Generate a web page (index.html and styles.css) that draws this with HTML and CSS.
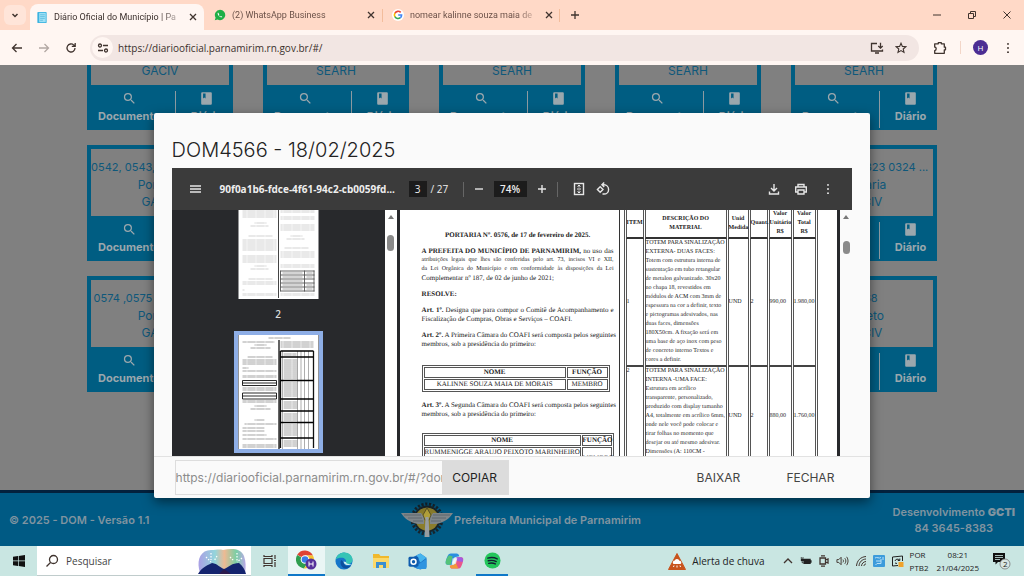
FILE: index.html
```html
<!DOCTYPE html>
<html lang="pt-BR">
<head>
<meta charset="utf-8">
<title>Diário Oficial do Município | Parnamirim</title>
<link rel="stylesheet" href="styles.css">
</head>
<body>
<svg class="defs" aria-hidden="true">
  <symbol id="i-search" viewBox="0 0 24 24"><path d="M15.5 14h-.79l-.28-.27A6.471 6.471 0 0 0 16 9.5 6.5 6.5 0 1 0 9.5 16c1.61 0 3.09-.59 4.23-1.57l.27.28v.79l5 4.99L20.49 19l-4.99-5zm-6 0C7.01 14 5 11.99 5 9.5S7.01 5 9.5 5 14 7.01 14 9.5 11.99 14 9.5 14z"/></symbol>
  <symbol id="i-book" viewBox="0 0 24 24"><path d="M19 2H5c-1 0-1.500.5-1.500 1.500v17c0 1 .5 1.500 1.500 1.500h14c1 0 1.500-.5 1.500-1.500v-17C20.500 2.500 20 2 19 2zM6.500 4h4v8l-2-1.500-2 1.500z"/></symbol>
  <symbol id="i-close" viewBox="0 0 10 10"><path d="M2 2l6 6M8 2l-6 6"/></symbol>
  <symbol id="i-dots" viewBox="0 0 16 16"><path d="M8 2.500v.01M8 8v.01M8 13.500v.01" stroke-width="2.600" stroke-linecap="round"/></symbol>
</svg>

<header class="browser">
  <div class="tabs">
    <button class="tab-menu" aria-label="Pesquisar guias"><svg class="ln" viewBox="0 0 10 10" width="10" height="10"><path d="M2.500 4L5 6.500 7.500 4" stroke-width="1.500"/></svg></button>
    <div class="tab active">
      <svg viewBox="0 0 12 14" width="12" height="13"><rect x="1" y="1" width="10" height="12" rx="1" fill="#3bb3e0"/><rect x="3" y="2" width="7" height="10" fill="#9ee0f5"/><path d="M4 4h5M4 6h5M4 8h5M4 10h3" stroke="#58b9dd" stroke-width=".8"/></svg>
      <span class="tab-title">Diário Oficial do Município | Pa</span>
      <button aria-label="Fechar guia"><svg class="ln" width="10" height="10"><use href="#i-close"/></svg></button>
    </div>
    <div class="tab">
      <svg viewBox="0 0 12 12" width="12" height="12"><path d="M6 .8a5.200 5.200 0 1 1-2.400 9.800L.8 11.300l.8-2.600A5.200 5.200 0 0 1 6 .8z" fill="#1fae45"/><path d="M4 3.500c-.8.800-.3 2.300.9 3.500s2.700 1.800 3.500.9l-1.300-1-.7.500c-.8-.3-1.200-.8-1.500-1.500l.4-.7z" fill="#fff"/></svg>
      <span class="tab-title">(2) WhatsApp Business</span>
      <button aria-label="Fechar guia"><svg class="ln" width="10" height="10"><use href="#i-close"/></svg></button>
    </div>
    <div class="tab divided">
      <svg viewBox="0 0 12 12" width="12" height="12"><circle cx="6" cy="6" r="6" fill="#fff"/><g fill="none" stroke-width="1.600"><path d="M8.700 3.400A3.600 3.600 0 0 0 2.900 4.300" stroke="#ea4335"/><path d="M2.900 4.200a3.600 3.600 0 0 0 0 3.600" stroke="#fbbc05"/><path d="M2.900 7.700a3.600 3.600 0 0 0 5.400 1" stroke="#34a853"/><path d="M8.300 8.800A3.600 3.600 0 0 0 9.600 6H6.200" stroke="#4285f4"/></g></svg>
      <span class="tab-title">nomear kalinne souza maia de</span>
      <button aria-label="Fechar guia"><svg class="ln" width="10" height="10"><use href="#i-close"/></svg></button>
    </div>
    <button class="new-tab" aria-label="Nova guia"><svg class="ln" viewBox="0 0 10 10" width="10" height="10"><path d="M5 1v8M1 5h8"/></svg></button>
    <div class="window-buttons">
      <button aria-label="Minimizar"><svg class="ln thin" viewBox="0 0 10 10" width="10" height="10"><path d="M1 5h8"/></svg></button>
      <button aria-label="Restaurar"><svg class="ln thin" viewBox="0 0 10 10" width="10" height="10"><path d="M1.500 3.500h5v5h-5zM3.500 3.500v-2h5v5h-2"/></svg></button>
      <button aria-label="Fechar"><svg class="ln thin" viewBox="0 0 10 10" width="10" height="10"><path d="M1.500 1.500l7 7M8.500 1.500l-7 7"/></svg></button>
    </div>
  </div>
  <div class="toolbar">
    <button aria-label="Voltar"><svg class="ln" viewBox="0 0 12 12" width="12" height="12"><path d="M11 6H2M5.500 2L1.500 6l4 4"/></svg></button>
    <button class="off" aria-label="Avançar"><svg class="ln" viewBox="0 0 12 12" width="12" height="12"><path d="M1 6h9M6.500 2l4 4-4 4"/></svg></button>
    <button aria-label="Recarregar"><svg class="ln" viewBox="0 0 12 12" width="12" height="12"><path d="M10 6a4 4 0 1 1-1.200-2.900L10 4.200M10.200 1v3.400H6.800"/></svg></button>
    <div class="omnibox">
      <span class="site-info"><svg class="ln" viewBox="0 0 12 12" width="12" height="12"><circle cx="3" cy="3.500" r="1.500"/><path d="M6 3.500h5M1 8.500h5"/><circle cx="9" cy="8.500" r="1.500"/></svg></span>
      <input class="address" type="text" aria-label="Endereço" value="https://diariooficial.parnamirim.rn.gov.br/#/">
      <button aria-label="Instalar"><svg class="ln" viewBox="0 0 14 12" width="14" height="12"><path d="M7 1.500H1.500v7.500h11V7.500M5 11h4M10.500.8v5M8.300 4l2.200 2.200L12.700 4"/></svg></button>
      <button aria-label="Favoritar"><svg class="ln" viewBox="0 0 12 12" width="12" height="12"><path d="M6 1.200l1.400 3.200 3.500.3-2.700 2.300.8 3.400-3-1.800-3 1.800.8-3.400L1.100 4.700l3.500-.3z" stroke-width="1.100"/></svg></button>
    </div>
    <button class="ext" aria-label="Extensões"><svg class="ln" viewBox="0 0 14 14" width="14" height="14"><path d="M1.700 2.800h3.600V1.700h3v1.100h3v3.400h1.200v2.600h-1.200v3.500H1.700V9.600c2-.3 2-3.300 0-3.600z" stroke-width="1.300" stroke-linejoin="round"/></svg></button>
    <span class="bar"></span>
    <button class="avatar" aria-label="Perfil">H</button>
    <button aria-label="Menu"><svg class="ln" width="12" height="12"><use href="#i-dots"/></svg></button>
  </div>
</header>

<div class="viewport">
  <main class="board"><div class="cards" id="cards"></div></main>
  <footer class="site-footer">
    <p>© 2025 - DOM - Versão 1.1</p>
    <div class="brand">
      <svg viewBox="0 0 52 38" width="52" height="38"><circle cx="26" cy="18" r="15" fill="none" stroke="#17242c" stroke-width="3" stroke-dasharray="2.200 1.600"/><circle cx="26" cy="18" r="13.500" fill="#17242c"/><circle cx="26" cy="18" r="11.500" fill="#8b7d2c"/><path d="M0 12h20l3 4v7h-6C8 21 3 17 0 12zM52 12H32l-3 4v7h6c9-2 14-6 17-11z" fill="#7f868a"/><path d="M3 14h17M7 17h14M12 20h10M49 14H32M45 17H31M40 20H30" stroke="#596168" stroke-width=".8"/><path d="M26 7l4 7-2 5h-4l-2-5z" fill="#b1a03a" stroke="#3c3a22" stroke-width=".7"/><path d="M24.500 16h3l1 20h-5z" fill="#989da0"/></svg>
      <span>Prefeitura Municipal de Parnamirim</span>
    </div>
    <p class="dev">Desenvolvimento <b>GCTI</b><br>84 3645-8383</p>
  </footer>

  <div class="overlay">
    <section class="modal" role="dialog" aria-labelledby="dlg-title">
      <div class="modal-content">
        <h1 id="dlg-title">DOM4566 - 18/02/2025</h1>
        <div class="pdf">
          <div class="pdf-bar">
            <button aria-label="Menu"><svg viewBox="0 0 12 12" width="12" height="12"><path d="M0 3h11M0 6h11M0 9h11"/></svg></button>
            <span class="pdf-name">90f0a1b6-fdce-4f61-94c2-cb0059fd...</span>
            <input class="page-no" type="text" aria-label="Página" value="3">
            <span class="page-total">/ 27</span>
            <span class="sep"></span>
            <button aria-label="Reduzir"><svg viewBox="0 0 10 10" width="10" height="10"><path d="M1 5h8"/></svg></button>
            <input class="zoom" type="text" aria-label="Zoom" value="74%">
            <button aria-label="Ampliar"><svg viewBox="0 0 10 10" width="10" height="10"><path d="M1 5h8M5 1v8"/></svg></button>
            <span class="sep near"></span>
            <button class="fit" aria-label="Ajustar"><svg viewBox="0 0 12 14" width="12" height="14"><rect x="1.500" y="1.500" width="9" height="11"/><path d="M6 3v2.500M4.500 4.500L6 3l1.500 1.500M6 11V8.500M4.500 9.500L6 11l1.500-1.500M4 7h4" stroke-width="1"/></svg></button>
            <button aria-label="Girar"><svg viewBox="0 0 14 14" width="14" height="14"><path d="M4.200 4.700L7 7.500l-2.800 2.800-2.800-2.800zM6 2.800h2a4.500 4.500 0 0 1 0 9.200H6.500M8.200.5L5.900 2.800l2.300 2.300"/></svg></button>
            <span class="push"></span>
            <button aria-label="Baixar"><svg viewBox="0 0 12 12" width="12" height="12"><path d="M6 1v6.500M3 5l3 3 3-3M1.500 8.500V11h9V8.500"/></svg></button>
            <button aria-label="Imprimir"><svg viewBox="0 0 14 12" width="14" height="12"><path d="M4 3.500v-2h6v2M4 9H1.700V4h10.600v5H10M4 7h6v4H4z"/></svg></button>
            <button aria-label="Mais"><svg width="12" height="12"><use href="#i-dots"/></svg></button>
          </div>
          <div class="pdf-body">
            <div class="thumbs">
              <div class="thumb">
                <svg viewBox="0 0 80 89" width="81" height="89">
                  <defs>
                    <pattern id="p-light" width="9" height="2" patternUnits="userSpaceOnUse"><path d="M0 1h8.500" stroke="#c8c8c8" stroke-width=".8"/></pattern>
                    <pattern id="p-dark" width="9" height="2" patternUnits="userSpaceOnUse"><path d="M0 1h8.500" stroke="#8c8c8c" stroke-width=".8"/></pattern>
                  </defs>
                  <rect width="80" height="89" fill="#fff"/>
                  <g fill="url(#p-light)"><path d="M4 0h34v8H4zM16 12h12v2H16zM12 15h18v2H12zM10 25h24v2H10zM4 29h34v12H4zM4 45h34v8H4zM16 55h12v2H16zM12 58h18v2H12zM10 68h24v2H10zM4 71h34v4H4zM4 79h2v2H4zM4 83h34v3H4zM42 0h34v3H42zM42 6h34v4H42zM42 14h34v7H42zM52 25h12v2H52zM48 28h18v2H48zM46 37h24v2H46zM42 41h34v7H42zM42 54h34v4H42zM42 83h34v3H42z"/></g>
                  <path d="M40 0v88" stroke="#444"/>
                  <path d="M42 61h34M42 65h34M42 69h34M42 73h34M42 77h34M42 81h34M42 60.500v21M66 60.500v21M75.500 60.500v21" stroke="#555" stroke-width=".9" fill="none"/>
                  <path d="M44 63h20M44 67h20M44 71h20M44 75h20M44 79h20M68 63h6M68 67h6M68 75h6M68 79h6" stroke="#aaa" stroke-width="1.200"/>
                </svg>
              </div>
              <span class="thumb-label">2</span>
              <div class="thumb current">
                <svg viewBox="0 0 80 114" width="81" height="114">
                  <rect width="80" height="114" fill="#fff"/>
                  <g fill="url(#p-dark)"><path d="M30 2h22v2H30zM4 6h32v2H4zM16 9h12v2H16zM12 12h20v2H12zM9 21h25v2H9zM4 24h34v6H4zM4 32h6v2H4zM4 35h34v2H4zM4 40h34v3H4zM4 52h34v4H4zM4 65h34v3H4zM16 70h12v2H16zM12 73h20v2H12zM16 84h10v2H16zM6 88h32v2H6zM4 92h22v2H4zM4 95h22v2H4zM4 99h24v2H4zM4 103h34v2H4zM4 109h34v4H4zM42 6h33v7H42zM45 18h13v3H45zM45 24h14v20H45zM45 47h14v15H45zM45 66h14v8H45zM45 78h14v8H45zM45 89h14v12H45zM45 105h14v7H45z"/></g>
                  <path d="M59 16v98M62.500 16v98M66 16v98M70 16v98M44 16v98" stroke="#777" stroke-width=".6"/>
                  <path d="M40.500 5v109M42 16v97M75 16v97" stroke="#111" stroke-width="1.300"/>
                  <path d="M42 16h33M42 22h33M42 45.500h33M42 64h33M42 76h33M42 87.500h33M42 103h33" stroke="#000" stroke-width="1.600"/>
                  <path d="M4 45.500h34v5H4zM4 48h34M4 58h34v6H4zM4 61h34" fill="none" stroke="#111" stroke-width=".9"/>
                </svg>
              </div>
            </div>
            <div class="scroll"><i class="up"></i><i class="knob"></i></div>
            <div class="page">
              <div class="col-left">
                <h2>PORTARIA Nº. 0576, de 17 de fevereiro de 2025.</h2>
                <p><span><b>A PREFEITA DO MUNICÍPIO DE PARNAMIRIM,</b> no uso das</span><span class="dense">atribuições legais que lhes são conferidas pelo art. 73, incisos VI e XII,</span><span class="dense">da Lei Orgânica do Município e em conformidade às disposições da Lei</span><span>Complementar nº 187, de 02 de junho de 2021;</span></p>
                <p><span><b>RESOLVE:</b></span></p>
                <p><span><b>Art. 1º.</b> Designa que para compor o Comitê de Acompanhamento e</span><span>Fiscalização de Compras, Obras e Serviços – COAFI.</span></p>
                <p><span><b>Art. 2º.</b> A Primeira Câmara do COAFI será composta pelos seguintes</span><span>membros, sob a presidência do primeiro:</span></p>
                <table class="members">
                  <tr><th>NOME</th><th class="role">FUNÇÃO</th></tr>
                  <tr><td>KALINNE SOUZA MAIA DE MORAIS</td><td>MEMBRO</td></tr>
                </table>
                <p><span><b>Art. 3º.</b> A Segunda Câmara do COAFI será composta pelos seguintes</span><span>membros, sob a presidência do primeiro:</span></p>
                <table class="members second">
                  <tr><th>NOME</th><th class="role">FUNÇÃO</th></tr>
                  <tr><td>RUMMENIGGE ARAUJO PEIXOTO MARINHEIRO</td><td rowspan="2">MEMBRO</td></tr>
                  <tr><td></td></tr>
                </table>
              </div>
              <div class="col-right">
                <table class="items">
                  <colgroup><col class="w-item"><col class="w-desc"><col class="w-unit"><col class="w-qty"><col class="w-val"><col class="w-val"></colgroup>
                  <tr><th>ITEM</th><th>DESCRIÇÃO DO<br>MATERIAL</th><th>Unid<br>Medida</th><th>Quant.</th><th>Valor<br>Unitário<br>R$</th><th>Valor<br>Total<br>R$</th></tr>
                  <tr><td>1</td><td>TOTEM PARA SINALIZAÇÃO<br>EXTERNA- DUAS FACES:<br>Totem com estrutura interna de<br>sustentação em tubo retangular<br>de metalon galvanizado. 30x20<br>no chapa 18, revestidos em<br>módulos de ACM com 3mm de<br>espessura na cor a definir, texto<br>e pictogramas adesivados, nas<br>duas faces, dimensões<br>180X50cm. A fixação será em<br>uma base de aço inox com peso<br>de concreto interno Textos e<br>cores a definir.</td><td>UND</td><td>2</td><td>990,00</td><td>1.980,00</td></tr>
                  <tr><td class="top">2</td><td>TOTEM PARA SINALIZAÇÃO<br>INTERNA -UMA FACE:<br>Estrutura em acrílico<br>transparente, personalizado,<br>produzido com display tamanho<br>A4, totalmente em acrílico 6mm,<br>onde nele você pode colocar e<br>tirar folhas no momento que<br>desejar ou até mesmo adesivar.<br>Dimensões (A: 110CM -<br>L: 30CM)</td><td>UND</td><td>2</td><td>880,00</td><td>1.760,00</td></tr>
                </table>
              </div>
            </div>
            <div class="scroll right"><i class="up"></i><i class="knob"></i></div>
          </div>
        </div>
      </div>
      <div class="modal-footer">
        <div class="copy">
          <input type="text" aria-label="Link do documento" value="https://diariooficial.parnamirim.rn.gov.br/#/?dom=4566">
          <button>COPIAR</button>
        </div>
        <button class="flat">BAIXAR</button>
        <button class="flat">FECHAR</button>
      </div>
    </section>
  </div>
</div>

<nav class="taskbar">
  <button class="start" aria-label="Iniciar"><svg viewBox="0 0 12 12" width="12" height="12"><path d="M0 1.700l5-.7v4.600H0zM5.700.9L12 0v5.600H5.700zM0 6.300h5V11l-5-.7zM5.700 6.300H12V12l-6.300-.9z" fill="#111"/></svg></button>
  <label class="search">
    <svg class="ln" viewBox="0 0 14 14" width="14" height="14"><circle cx="8.500" cy="5.500" r="4"/><path d="M5.500 8.500L1.500 12.500"/></svg>
    <input type="text" placeholder="Pesquisar" aria-label="Pesquisar">
    <svg viewBox="0 0 52 27" width="52" height="27"><defs><linearGradient id="g-sky"><stop offset="0" stop-color="#8d7fdc"/><stop offset=".35" stop-color="#6fc7cf"/><stop offset=".55" stop-color="#e7a36f"/><stop offset=".8" stop-color="#4dbf87"/><stop offset="1" stop-color="#a38be0"/></linearGradient></defs><path d="M2 22C0 12 4 3 14 3c5 0 8-1 12 0 8-2 18-2 21 6 2 6 2 11 1 17H3z" fill="url(#g-sky)" opacity=".75"/><path d="M9 10l5 5M14 6v7M20 9l-3 5M33 10l4 4M40 6v8M45 11l-5 4" stroke="#fff" stroke-width="1.200" stroke-dasharray="1.500 1.500"/><path d="M1 27c3-5 7-8 14-11 6 1 7 4 12 6 5-2 8-6 15-6 4 3 6 7 7 11z" fill="#14246e"/><path d="M27 22l-5 5h12z" fill="#2c1a4d"/></svg>
  </label>
  <button class="app" aria-label="Visão de tarefas"><svg class="ln" viewBox="0 0 14 12" width="14" height="12"><path d="M1 3.500h8v5H1zM1 0v1.500h8V0M1 12v-1.500h8V12M12 0v4M12 7v5M11 5.500h2" stroke-width="1.200"/></svg></button>
  <button class="app on" aria-label="Chrome"><svg viewBox="0 0 22 20" width="22" height="20"><path d="M9 9L1.200 4.700A9 9 0 0 1 17 5.500H9z" fill="#df4234"/><path d="M9 9.500L1.200 4.900A9 9 0 0 0 8 18.400l4-6.500z" fill="#2f9e4f"/><path d="M9 5.500h8A9 9 0 0 1 8 18.400l5-7.500z" fill="#f7c32e"/><circle cx="9" cy="9.500" r="4.300" fill="#fff"/><circle cx="9" cy="9.500" r="3.300" fill="#3a7be8"/><circle cx="15" cy="14" r="5.500" fill="#55309b"/><path d="M13 11.500v5M17 11.500v5M13 14h4" stroke="#fff"/></svg></button>
  <button class="app" aria-label="Edge"><svg viewBox="0 0 20 20" width="18" height="18"><circle cx="10" cy="10" r="9.500" fill="#1676c9"/><path d="M.7 8.500C2 3 6 .5 10.300.5c5.500 0 9.200 4 9.200 8 0 3-2.500 4.700-5 4.700-2.300 0-3.300-1-2.300-2.400.5-2.600-1.800-4.500-4.600-4.500C4.500 6.300 2 7 .7 8.500z" fill="#35c4b5"/><path d="M7 9c-2 3-.5 8.500 4.500 9.300 2.500 0 5-1.300 6.300-3.300-4 1.600-8.300 0-8.300-4z" fill="#0d4f9e"/><path d="M9.500 10.500c0 3 3 4.300 6.500 4 2-.2 3-.9 3-.9-1-.3-6.500.4-6.800-2.600z" fill="#cdeff0"/></svg></button>
  <button class="app" aria-label="Explorador"><svg viewBox="0 0 18 16" width="18" height="16"><path d="M1 1h6l1.500 2H17v12H1z" fill="#f0b92d"/><path d="M1 5h16v10H1z" fill="#fbd96a"/><path d="M4 15V9h10v6h-3v-3H7v3z" fill="#3c8fd0"/></svg></button>
  <button class="app" aria-label="Outlook"><svg viewBox="0 0 20 18" width="19" height="17"><path d="M6 4l7-3.500L19.500 5v10L13 17.500 6 15z" fill="#1b6fc4"/><path d="M9 2.500l4-2L19.500 5 13 10z" fill="#47b5ee"/><path d="M19.500 6L9 13.500V17h9c1 0 1.500-.7 1.500-1.500z" fill="#2f94e0"/><rect x=".5" y="4" width="10.500" height="10.500" rx="1.500" fill="#0f5cad"/><circle cx="5.800" cy="9.200" r="2.600" fill="none" stroke="#fff" stroke-width="1.600"/></svg></button>
  <button class="app" aria-label="Copilot"><svg viewBox="0 0 20 18" width="19" height="18"><path d="M6 1h6c2 0 2.500 1 3 3l-5 1-3 8H3c-3 0-2.500-3-1.500-6S3.500 1 6 1z" fill="#2a8fe0"/><path d="M1.500 7L4 3l4 1-2 9H3c-3 0-2.500-3-1.500-6z" fill="#55c27a"/><path d="M14 17H8c-2 0-2.500-1-3-3l5-1 3-8h4c3 0 2.500 3 1.500 6S16.500 17 14 17z" fill="#e9568a"/><path d="M5 14l5-1 1-3 3 7H8c-2 0-2.500-1-3-3z" fill="#f29a3a"/><path d="M12 5h4c3 0 3.500 2 2.500 5l-6-1z" fill="#a35be0"/><path d="M8 6h5l-1.500 6H7z" fill="#fff" opacity=".7"/></svg></button>
  <button class="app run" aria-label="Spotify"><svg viewBox="0 0 18 18" width="17" height="17"><circle cx="9" cy="9" r="8.500" fill="#23c65b"/><path d="M4 6.500c3.500-1 7-.7 10 .8M4.500 9.300c3-.8 6-.5 8.500.8M5 12c2.500-.6 5-.4 7 .7" fill="none" stroke="#123" stroke-width="1.500" stroke-linecap="round"/></svg></button>
  <span class="push"></span>
  <button class="weather"><svg viewBox="0 0 18 17" width="18" height="17"><path d="M9 .5l8.500 16H.5z" fill="#c8531c" stroke="#c8531c" stroke-linejoin="round"/><path d="M5.500 11a2 2 0 0 1 1.300-3.500 2.500 2.500 0 0 1 4.600.2A1.800 1.800 0 0 1 12.500 11z" fill="#fff"/><path d="M6 12.500l-.5 1.500M9 12.500v2M12 12.500l.5 1.500" stroke="#fff"/></svg>Alerta de chuva</button>
  <div class="tray">
    <svg class="ln" viewBox="0 0 12 12" width="12" height="12"><path d="M2 8l4-4 4 4"/></svg>
    <svg viewBox="0 0 14 12" width="12" height="12"><path d="M4 3.500h8.500V5h1v3h-1v1.500H4zM1 3h3v3H1z" fill="#222"/><path d="M1.500 1.500V3M3.500 1.500V3M2.500 6v2H4" stroke="#222" fill="none"/></svg>
    <svg class="ln" viewBox="0 0 12 12" width="12" height="12"><path d="M2 3h5.500v6H2zM7.500 5l2.500-1v4L7.500 7M3 .8h4M3 11.200h4"/></svg>
    <svg class="ln" viewBox="0 0 14 12" width="13" height="12"><path d="M1 4.500h2L5.500 2v8L3 7.500H1zM7.500 4.500c.7 1 .7 2 0 3M9.500 3c1.500 2 1.500 4 0 6M11.500 1.500c2 3 2 6 0 9" stroke-width="1"/></svg>
    <svg class="ln" viewBox="0 0 12 12" width="12" height="12"><path d="M1.500 11C2 5.500 5.500 2 11 1.500M4 11c.3-4 3-6.700 7-7M6.500 11c.2-2.500 2-4.300 4.500-4.500M9 11c0-1.200.8-2 2-2" stroke-width="1"/></svg>
    <svg viewBox="0 0 12 12" width="12" height="12"><rect width="12" height="12" rx="1" fill="#3c9bdb"/><path d="M2 3c2-1.500 4 1 6-.5M3 6h5M8 4v4.500H4L2.500 10M10 2v3" fill="none" stroke="#b7e0f8" stroke-width="1"/></svg>
    <svg viewBox="0 0 12 12" width="13" height="12"><path d="M6.500 10.500L1 11V2l10-1v5M3.500 6c.5-2 3-2.500 4.500-1M8.300 3.500v2h-2M3.500 8l2 .5" fill="none" stroke="#222" stroke-width="1"/><rect x="7" y="7" width="5" height="5" fill="#f0a32c"/></svg>
  </div>
  <div class="lang">POR<br>PTB2</div>
  <div class="clock">08:21<br>21/04/2025</div>
  <button class="notes" aria-label="Notificações"><svg viewBox="0 0 20 18" width="20" height="18"><path d="M1 1h12v9H6l-2.500 2.500V10H1z" fill="#111"/><path d="M3 3.500h8M3 5.500h8M3 7.500h5" stroke="#cde9e5" stroke-width=".8"/><circle cx="13" cy="12" r="5" fill="#d9e6e4" stroke="#777" stroke-width=".8"/></svg><b>2</b></button>
</nav>
<script src="cards.js"></script>
</body>
</html>
```
FILE: cards.js
```js
const cards = [
  ['0530', 'Portaria', 'GACIV'], ['0531', 'Portaria', 'SEARH'], ['0532', 'Portaria', 'SEARH'], ['0533', 'Portaria', 'SEARH'], ['0534', 'Portaria', 'SEARH'],
  ['0542, 0543, 0544, 0545 ..', 'Portaria', 'GACIV'], ['0546', 'Portaria', 'GACIV'], ['0547', 'Portaria', 'GACIV'], ['0548', 'Portaria', 'GACIV'], ['0321 0322 0323 0324 ...', 'Portaria', 'GACIV'],
  ['0574 ,0575 ,0576 ,0577 ..', 'Portaria', 'GACIV'], ['0577', 'Portaria', 'GACIV'], ['0578', 'Portaria', 'GACIV'], ['0579', 'Portaria', 'GACIV'], ['0568', 'Projeto', 'GACIV']
];
document.getElementById('cards').innerHTML = cards.map(([numbers, kind, office]) => `
  <article class="card">
    <div class="card-text"><span class="numbers">${numbers}</span><span>${kind}</span><span>${office}</span></div>
    <div class="card-actions">
      <a class="doc" href="#"><svg width="15" height="15"><use href="#i-search"/></svg>Documento</a>
      <a class="journal" href="#"><svg width="15" height="15"><use href="#i-book"/></svg>Diário</a>
    </div>
  </article>`).join('');
```
FILE: styles.css
```css
* { box-sizing: border-box; }
html, body { height: 100%; margin: 0; }
body { display: flex; flex-direction: column; overflow: hidden; font-family: "Open Sans", "Noto Sans", sans-serif; font-size: 10px; color: #3b302c; }
button { border: 0; padding: 0; background: none; color: inherit; font: inherit; display: flex; align-items: center; justify-content: center; flex: none; }
input { border: 0; padding: 0; background: none; color: inherit; font: inherit; outline: 0; min-width: 0; }
p, h1, h2 { margin: 0; }
a { color: inherit; text-decoration: none; }
svg { flex: none; display: block; }
.defs { position: absolute; width: 0; height: 0; }
.ln { fill: none; stroke: #40342f; stroke-width: 1.3; }
.thin { stroke-width: 1; }
.push { flex: 1; }

/* Browser frame */
.browser { flex: none; background: #fff6f2; }
.tabs { display: flex; align-items: center; height: 30px; background: #ffd9c7; padding-left: 4px; font-family: Roboto, "Open Sans", sans-serif; font-size: 9px; }
.tab-menu { width: 22px; height: 20px; border-radius: 6px; background: #ffe5d9; margin-right: 4px; }
.tab { display: flex; align-items: center; width: 174px; height: 26px; padding: 0 3px 0 10px; gap: 6px; color: #6b5148; }
.tab.active { align-self: flex-end; background: #fff6f2; border-radius: 8px 8px 0 0; color: #3b302c; padding-left: 6px; }
.tab + .tab { padding-left: 10px; width: 178px; }
.tab button { width: 16px; height: 16px; }
.tab-title { flex: 1; overflow: hidden; white-space: nowrap; -webkit-mask-image: linear-gradient(90deg, #000 85%, transparent 105%); mask-image: linear-gradient(90deg, #000 85%, transparent 105%); }
.tab.divided { background: linear-gradient(#f3bd9c, #f3bd9c) left center / 1px 13px no-repeat, linear-gradient(#f3bd9c, #f3bd9c) right center / 1px 13px no-repeat; }
.new-tab { width: 30px; height: 26px; }
.window-buttons { display: flex; margin-left: auto; }
.window-buttons button { width: 35px; height: 30px; }
.toolbar { display: flex; align-items: center; height: 35px; padding: 0 3px; }
.toolbar > button { width: 27px; height: 26px; }
.toolbar .off { opacity: .4; }
.omnibox { flex: 1; display: flex; align-items: center; height: 26px; margin: 0 7px 0 6px; padding: 0 6px 0 2px; border-radius: 13px; background: #f2e6e3; }
.omnibox button { width: 24px; height: 24px; }
.site-info { display: flex; align-items: center; justify-content: center; width: 21px; height: 21px; border-radius: 50%; background: #fff6f2; margin-right: 5px; }
.address { flex: 1; }
.bar { width: 1px; height: 13px; background: #f3d6c8; margin: 0 12px 0 7px; }
.toolbar > .avatar { width: 15px; height: 15px; border-radius: 50%; background: #4c2d93; color: #fff; font-size: 8px; margin-right: 6px; }

/* Page behind the dialog */
.viewport { position: relative; flex: 1; min-height: 0; display: flex; flex-direction: column; overflow: hidden; background: #808080; font-family: Inter, "Open Sans", sans-serif; }
.board { flex: 1; min-height: 0; display: flex; flex-direction: column; justify-content: flex-end; padding: 0 87px 98px; }
.cards { display: grid; grid-template-columns: repeat(5, 1fr); gap: 15px 30px; }
.card { min-width: 0; background: #005d82; padding-top: 4px; }
.card-text { height: 67px; margin: 0 4px; padding-top: 10px; background: #808080; color: #0f587b; font-size: 12px; line-height: 17px; text-align: center; }
.card-text span { display: block; white-space: nowrap; }
.card-text .numbers { font-size: 11px; }
.card-actions { display: flex; height: 45px; padding: 6px 0 2px; color: #9ba7ad; font-size: 11px; font-weight: 700; line-height: 15px; }
.card-actions svg { fill: #9ba7ad; margin-bottom: 3px; }
.card-actions a { display: flex; flex-direction: column; align-items: center; }
.doc { width: 61%; padding-right: 4px; border-right: 1px solid #8d9aa1; }
.journal { flex: 1; padding-left: 4px; }
.site-footer { flex: none; display: flex; align-items: center; justify-content: space-between; height: 56px; padding: 0 9px; border-top: 3px solid #03213d; background: #005a84; color: #8094a0; font-size: 11px; font-weight: 600; line-height: 16px; }
.brand { display: flex; align-items: center; gap: 1px; }
.dev { text-align: center; }

/* Dialog */
.overlay { position: absolute; inset: 0; display: flex; align-items: center; justify-content: center; }
.modal { display: flex; flex-direction: column; width: 70%; height: 80%; background: #fafafa; border-radius: 2px; box-shadow: 0 4px 12px rgba(0, 0, 0, .5); }
.modal-content { flex: 1; min-height: 0; display: flex; flex-direction: column; padding: 24px 18px 0; }
.modal h1 { font-size: 20px; line-height: 26px; font-weight: 300; color: #222; margin-bottom: 5px; }
.modal-footer { flex: none; display: flex; align-items: center; height: 42px; padding: 0 14px 0 21px; border-top: 1px solid #e2e2e2; font-size: 12px; color: #444; }
.copy { display: flex; height: 35px; margin-right: auto; border: 1px solid #ddd; }
.copy input { width: 266px; color: #8c8c8c; }
.copy button { width: 66px; background: #dcdcdc; color: #222; }
.flat { width: 92px; height: 34px; }

/* PDF viewer */
.pdf { flex: 1; min-height: 0; display: flex; flex-direction: column; background: #28292c; font-family: "Open Sans", sans-serif; }
.pdf-bar { flex: none; display: flex; align-items: center; height: 42px; padding: 0 12px; background: #3b3b3b; color: #eee; font-size: 10px; }
.pdf-bar button { width: 24px; height: 24px; }
.pdf-bar .push + button ~ button { margin-left: 3px; }
.pdf-bar svg { fill: none; stroke: #e6e6e6; stroke-width: 1.4; }
.pdf-name { width: 177px; margin: 0 12px; font-weight: 700; white-space: nowrap; }
.page-no, .zoom { background: #1c1c1c; text-align: center; height: 16px; width: 18px; }
.zoom { width: 33px; margin: 0 3px; font-weight: 600; }
.page-total { width: 17px; margin-left: 4px; white-space: nowrap; }
.sep { width: 1px; height: 15px; background: #666; margin: 0 3px 0 15px; }
.sep.near { margin-left: 3px; }
.fit { margin-left: 6px; }
.pdf-body { flex: 1; min-height: 0; display: flex; overflow: hidden; }
.thumbs { flex: none; width: 213px; display: flex; flex-direction: column; align-items: center; color: #ddd; }
.thumb-label { line-height: 16px; margin: 7px 0 9px; font-size: 10px; font-weight: 600; }
.thumb.current { border: 4px solid #8eaee6; }
.scroll { flex: none; width: 12px; margin-right: 3px; background: #fff; display: flex; flex-direction: column; align-items: center; }
.scroll.right { margin: 0 0 0 3px; background: #fafafa; }
.up { border: 3px solid transparent; border-top: 0; border-bottom: 4px solid #777; margin: 5px 0 16px; }
.knob { width: 7px; height: 16px; border-radius: 4px; background: #8a8a8a; }
.right .knob { height: 13px; margin-top: 6px; }
.page { flex: 1; min-width: 0; display: flex; background: #fff; color: #222; font-family: "Liberation Serif", serif; font-size: 7px; line-height: 9px; text-rendering: geometricPrecision; }
.col-left { flex: none; width: 220px; padding: 21px 5px 0 22px; border-right: 1px solid #333; }
.col-left h2 { font-size: 7px; line-height: 9px; text-align: center; margin-bottom: 7px; }
.col-left p { margin-bottom: 7px; }
.col-left p span { display: block; white-space: nowrap; text-align-last: justify; }
.col-left p span:last-child { text-align-last: left; }
.col-left p .dense { font-size: 6px; }
.members { width: 188px; margin: 16px 0 9px; border: 1px solid #555; border-spacing: 1px; table-layout: fixed; text-align: center; }
.members.second { width: 192px; margin-top: 14px; }
.members th, .members td { border: 1px solid #555; padding: 0; height: 11px; line-height: 9px; white-space: nowrap; }
.role { width: 41px; }
.second .role { width: 30px; }
.col-right { padding-left: 4px; }
.items { width: 193px; border: 1px solid #555; border-top: 0; border-spacing: 1px 0; table-layout: fixed; font-size: 6px; line-height: 9px; }
.items th, .items td { border: 1px solid #555; border-top: 0; padding: 0; white-space: nowrap; }
.items th { font-size: 6px; border-bottom: 2px solid #333; }
.items td { border-bottom: 2px solid #444; }
.items .top { vertical-align: top; }
.w-item { width: 18px; }
.w-desc { width: 82px; }
.w-unit { width: 21px; }
.w-qty { width: 18px; }
.w-val { width: 23px; }

/* Taskbar */
.taskbar { flex: none; display: flex; align-items: center; height: 30px; background: #c9e6e2; color: #222; font-size: 10px; }
.taskbar button { height: 30px; }
.start { width: 37px; }
.search { display: flex; align-items: center; align-self: stretch; width: 214px; padding: 0 2px 0 8px; background: #fff; border-bottom: 1px solid #c0cccc; }
.search input { flex: 1; margin-left: 7px; }
.search input::placeholder { color: #444; opacity: 1; }
.app { width: 37px; }
.app.on { background: #eaf6f5; border-bottom: 2px solid #0f78c8; }
.app.run { border-bottom: 2px solid #0f78c8; width: 32px; margin-left: 3px; }
.weather { gap: 6px; margin-right: 17px; }
.tray { display: flex; align-items: center; gap: 6px; }
.lang, .clock { font-size: 8px; line-height: 13px; margin-left: 6px; white-space: nowrap; }
.clock { text-align: center; margin-left: 8px; }
.notes { position: relative; margin: 0 12px 0 13px; }
.notes b { position: absolute; left: 11px; top: 12px; font-size: 8px; line-height: 12px; font-weight: 400; }
```
